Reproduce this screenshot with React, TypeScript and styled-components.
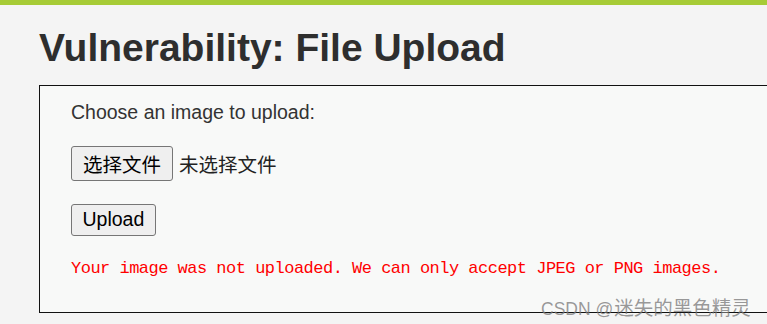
import React from "react";
import styled, { createGlobalStyle } from "styled-components";

const GlobalStyle = createGlobalStyle`
  html, body {
    margin: 0;
    padding: 0;
    background: #f4f4f4;
    overflow: hidden;
  }
  body {
    font-family: "Liberation Sans", Arial, "Noto Sans CJK SC", sans-serif;
    color: #2e2e2e;
  }
`;

function App() {
  return (
    <Page>
      <GlobalStyle />
      <TopBar />
      <Main>
        <Title>Vulnerability: File Upload</Title>
        <CodeArea>
          <Label>Choose an image to upload:</Label>
          <FileRow>
            <Btn $h={35} $px={11}>选择文件</Btn>
            <FileName>未选择文件</FileName>
          </FileRow>
          <UploadRow>
            <Btn $h={32} $px={10.5}>Upload</Btn>
          </UploadRow>
          <Message>
            Your image was not uploaded. We can only accept JPEG or PNG images.
          </Message>
        </CodeArea>
      </Main>
      <Watermark>
        <span className="latin">CSDN @</span>
        <span className="cjk">迷失的黑色精灵</span>
      </Watermark>
    </Page>
  );
}

const Page = styled.div`
  position: relative;
  width: 767px;
  height: 324px;
  overflow: hidden;
  background: #f4f4f4;
`;

const TopBar = styled.div`
  height: 5px;
  background: #a6cb36;
`;

const Main = styled.div`
  padding: 0 0 0 39px;
`;

const Title = styled.h1`
  margin: 19.6px 0 15.4px;
  font-size: 39px;
  line-height: 45px;
  font-weight: 700;
  color: #2e2e2e;
  white-space: nowrap;
`;

const CodeArea = styled.div`
  width: 800px;
  border: 1px solid #111;
  background: #f8f9f8;
  padding: 15px 30px 33px 31px;
`;

const Label = styled.div`
  font-size: 19.5px;
  line-height: 22px;
  color: #333;
`;

const FileRow = styled.div`
  display: flex;
  align-items: center;
  gap: 6px;
  margin-top: 23px;
`;

const UploadRow = styled.div`
  margin-top: 23px;
  display: flex;
`;

const Btn = styled.button<{ $h: number; $px: number }>`
  box-sizing: border-box;
  height: ${(p) => p.$h}px;
  padding: 0 ${(p) => p.$px}px;
  font-family: "Liberation Sans", Arial, "Noto Sans CJK SC", sans-serif;
  font-size: 19.5px;
  color: #000;
  background: #efefef;
  border: 1px solid #767676;
  border-radius: 3px;
  display: flex;
  align-items: center;
  justify-content: center;
`;

const FileName = styled.span`
  font-size: 19.5px;
  color: #222;
  font-family: "Noto Sans CJK SC", sans-serif;
`;

const Message = styled.pre`
  margin: 23px 0 0;
  font-family: "Liberation Mono", "Courier New", monospace;
  font-size: 17px;
  letter-spacing: -0.51px;
  line-height: 20px;
  color: #ff0000;
  white-space: pre;
`;

const Watermark = styled.div`
  position: absolute;
  left: 541px;
  top: 292px;
  display: flex;
  align-items: baseline;
  color: rgba(120, 120, 120, 0.75);
  white-space: nowrap;

  & > .latin {
    font-family: "Liberation Sans", Arial, sans-serif;
    font-size: 17.5px;
  }

  & > .cjk {
    font-family: "Noto Sans CJK SC", sans-serif;
    font-size: 19.5px;
    margin-left: 1px;
  }
`;

export default App;
